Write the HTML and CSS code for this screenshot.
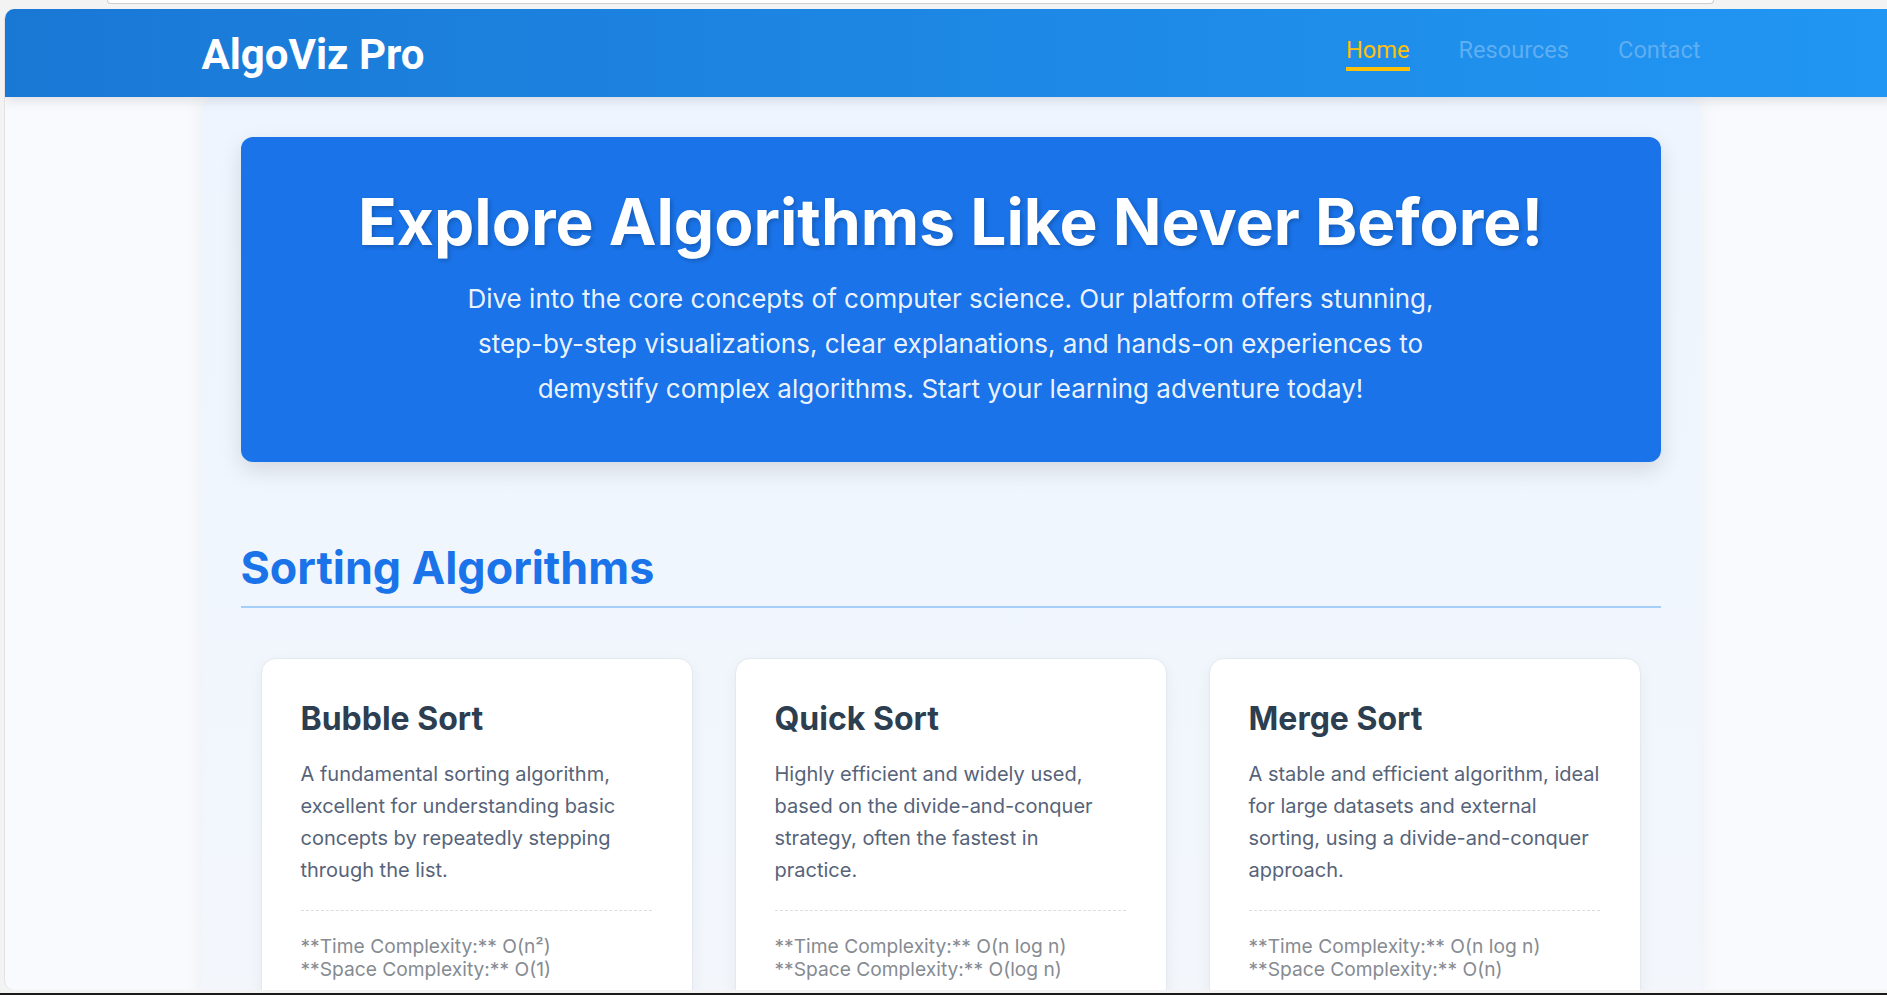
FILE: index.html
```html
<!DOCTYPE html>
<html lang="en">
<head>
<meta charset="utf-8">
<title>AlgoViz Pro</title>
<link rel="stylesheet" href="styles.css">
</head>
<body>
<div class="chrome-top"><div class="addr"></div></div>
<div class="frame">
  <header class="site-header">
    <div class="header-inner">
      <div class="logo">AlgoViz Pro</div>
      <nav class="nav">
        <a class="nav-link active" href="#">Home</a>
        <a class="nav-link" href="#">Resources</a>
        <a class="nav-link" href="#">Contact</a>
      </nav>
    </div>
  </header>
  <main class="container">
    <section class="hero">
      <h1>Explore Algorithms Like Never Before!</h1>
      <p>Dive into the core concepts of computer science. Our platform offers stunning, step-by-step visualizations, clear explanations, and hands-on experiences to demystify complex algorithms. Start your learning adventure today!</p>
    </section>
    <section class="category">
      <h2>Sorting Algorithms</h2>
      <div class="cards">
        <article class="card">
          <h3>Bubble Sort</h3>
          <p class="desc">A fundamental sorting algorithm, excellent for understanding basic concepts by repeatedly stepping through the list.</p>
          <p class="complexity">**Time Complexity:** O(n²)<br>**Space Complexity:** O(1)</p>
        </article>
        <article class="card">
          <h3>Quick Sort</h3>
          <p class="desc">Highly efficient and widely used, based on the divide-and-conquer strategy, often the fastest in practice.</p>
          <p class="complexity">**Time Complexity:** O(n log n)<br>**Space Complexity:** O(log n)</p>
        </article>
        <article class="card">
          <h3>Merge Sort</h3>
          <p class="desc">A stable and efficient algorithm, ideal for large datasets and external sorting, using a divide-and-conquer approach.</p>
          <p class="complexity">**Time Complexity:** O(n log n)<br>**Space Complexity:** O(n)</p>
        </article>
      </div>
    </section>
  </main>
</div>
<div class="chrome-bottom"></div>
</body>
</html>
```

FILE: styles.css
```css
html, body {
  margin: 0;
  padding: 0;
}
body {
  height: 995px;
  overflow: hidden;
  background: #f3f3f3;
  font-family: "Inter", "Roboto", "Liberation Sans", sans-serif;
}
.chrome-top {
  height: 9px;
  display: flex;
  padding-left: 107px;
}
.addr {
  width: 1605px;
  height: 3px;
  background: #ffffff;
  border: 1px solid #cdcdcd;
  border-top: 0;
  border-radius: 0 0 8px 8px;
}
.frame {
  width: 1891px;
  height: 981px;
  margin-left: 4px;
  border-left: 1px solid #e2e2e2;
  border-radius: 10px 0 0 10px;
  overflow: hidden;
  background: #f8fafd;
}
.chrome-bottom {
  margin-top: 3px;
  height: 2px;
  background: #1b1b1b;
}
.site-header {
  height: 88px;
  background: linear-gradient(90deg, #1a78d5 0%, #2196f3 100%);
  box-shadow: 0 3px 12px rgba(0, 0, 0, 0.12);
  position: relative;
  z-index: 2;
}
.header-inner {
  width: 1500px;
  height: 100%;
  margin: 0 auto;
  display: flex;
  align-items: center;
  justify-content: space-between;
}
.logo {
  font-family: "Roboto", "Liberation Sans", sans-serif;
  font-weight: 700;
  font-size: 42px;
  color: #ffffff;
  padding-left: 1px;
  margin-top: 2px;
}
.nav {
  display: flex;
  gap: 49px;
  align-items: center;
  margin-top: 1px;
}
.nav-link {
  font-family: "Roboto", "Liberation Sans", sans-serif;
  font-size: 23.6px;
  color: #5eaef2;
  text-decoration: none;
  padding-bottom: 3px;
  border-bottom: 4px solid transparent;
}
.nav-link.active {
  color: #ffc107;
  border-bottom-color: #ffc107;
}
.container {
  width: 1500px;
  margin: 0 auto;
  box-sizing: border-box;
  padding: 40px;
  min-height: 900px;
  background: linear-gradient(180deg, #eef5fe 0%, #f3f7fc 100%);
  border-radius: 15px 15px 0 0;
  box-shadow: 0 0 20px rgba(0, 0, 0, 0.05);
}
.hero {
  background: #1a73e8;
  border-radius: 12px;
  padding: 47px 40px 51px;
  text-align: center;
  color: #ffffff;
  box-shadow: 0 8px 22px rgba(0, 0, 0, 0.12);
}
.hero h1 {
  margin: 0 0 15px;
  font-size: 64px;
  font-weight: 700;
  line-height: 1.2;
  text-shadow: 2px 2px 4px rgba(0, 0, 0, 0.2);
}
.hero p {
  max-width: 1000px;
  margin: 0 auto;
  font-size: 26px;
  line-height: 45px;
  color: rgba(255, 255, 255, 0.93);
}
.category {
  margin-top: 80px;
}
.category h2 {
  margin: 0 0 50px;
  padding-bottom: 10px;
  font-size: 44.8px;
  font-weight: 700;
  line-height: 1.2;
  color: #1a73e8;
  border-bottom: 2px solid #a5cff9;
}
.cards {
  display: grid;
  grid-template-columns: repeat(3, 1fr);
  gap: 42px;
  padding: 0 20px;
}
.card {
  background: #ffffff;
  border: 1px solid #e4e9ef;
  border-radius: 15px;
  padding: 41px 40px 40px 39px;
  box-shadow: 0 5px 15px rgba(0, 0, 0, 0.05);
}
.card h3 {
  margin: 0 0 20px;
  font-size: 32px;
  font-weight: 700;
  line-height: 1.2;
  color: #2c3e50;
}
.card .desc {
  margin: 0 0 24px;
  font-size: 20px;
  line-height: 1.6;
  color: #566379;
}
.card .complexity {
  margin: 0;
  padding-top: 24px;
  border-top: 1px dashed #dddddd;
  font-size: 19.2px;
  line-height: 23px;
  color: #868b91;
}
```
